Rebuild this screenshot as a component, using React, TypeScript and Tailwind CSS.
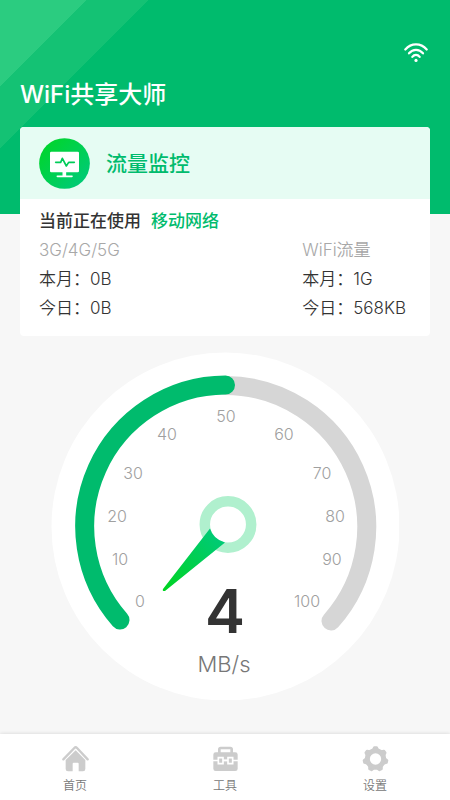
import React from 'react';

const TICKS = [
  { value: 0, x: 89, y: 255 },
  { value: 10, x: 69, y: 213 },
  { value: 20, x: 66, y: 170 },
  { value: 30, x: 82, y: 127 },
  { value: 40, x: 116, y: 88 },
  { value: 50, x: 175, y: 70 },
  { value: 60, x: 233, y: 88 },
  { value: 70, x: 271, y: 127 },
  { value: 80, x: 284, y: 170 },
  { value: 90, x: 281, y: 213 },
  { value: 100, x: 256, y: 255 },
];

const USAGE = [
  { title: '3G/4G/5G', month: '0B', today: '0B' },
  { title: 'WiFi流量', month: '1G', today: '568KB' },
];

function WifiIcon() {
  return (
    <svg className="w-6 h-5" viewBox="0 0 24 20" fill="none" stroke="#fff" strokeWidth="2.2" strokeLinecap="round">
      <path d="M1.3 6.5C4.2 3.2 8 1.4 12 1.4s7.800 1.800 10.700 5.100" />
      <path d="M5 10.300C7 8 9.400 6.900 12 6.900s5 1.100 7 3.400" />
      <path d="M8.300 13.800c1-1.300 2.300-2 3.700-2s2.700.7 3.700 2" />
      <circle cx="12" cy="17.400" r="1.600" fill="#fff" stroke="none" />
    </svg>
  );
}

function MonitorIcon() {
  return (
    <svg className="w-[51px] h-[51px]" viewBox="0 0 153 153">
      <defs>
        <linearGradient id="badge" x1="0" y1="0" x2="1" y2="1">
          <stop offset="0.1" stopColor="#00d52b" />
          <stop offset="1" stopColor="#00c982" />
        </linearGradient>
      </defs>
      <circle cx="76.500" cy="76.500" r="76" fill="url(#badge)" />
      <rect x="33" y="41" width="87" height="62" rx="4" fill="#fff" />
      <path d="M55 115h44" fill="none" stroke="#fff" strokeWidth="5" strokeLinecap="round" />
      <path d="M76 102v13" fill="none" stroke="#fff" strokeWidth="11" />
      <path d="M50 73h15l5-12 12 23 7-11h17" fill="none" stroke="#00cc58" strokeWidth="5" strokeLinecap="round" strokeLinejoin="round" />
    </svg>
  );
}

function HomeIcon() {
  return (
    <svg className="w-[27px] h-[27px]" viewBox="0 0 81 81" fill="#cccccc">
      <path d="M4 43 37 9q4-4 8 0l32 34" fill="none" stroke="#cccccc" strokeWidth="7" strokeLinecap="round" strokeLinejoin="round" />
      <path d="M11 45 41 16l29 29v27q0 7-7 7H50V56q0-3-3-3H35q-3 0-3 3v23H18q-7 0-7-7z" />
    </svg>
  );
}

function ToolboxIcon() {
  return (
    <svg className="w-[27px] h-[27px]" viewBox="0 0 81 81" fill="none">
      <path d="M22 24V13q0-4 4-4h29q4 0 4 4v11" stroke="#cccccc" strokeWidth="8" />
      <path d="M11 22h59q7 0 7 7v15H4V29q0-7 7-7z" fill="#cccccc" />
      <path d="M4 49h73v22q0 7-7 7H11q-7 0-7-7z" fill="#cccccc" />
      <path d="M19 38h14v18H19zM48 38h14v18H48z" fill="#cccccc" stroke="#fff" strokeWidth="5" />
      <path d="M35 46h11" stroke="#fff" strokeWidth="5" />
    </svg>
  );
}

const TEETH = [0, 1, 2, 3, 4, 5, 6];

function GearIcon() {
  return (
    <svg className="w-[27px] h-[27px]" viewBox="0 0 81 81" fill="none" stroke="#cccccc">
      <circle cx="40.500" cy="42" r="24.500" strokeWidth="15" />
      {TEETH.map((n) => (
        <path key={n} d="M37 7h7l5 10H32z" fill="#cccccc" strokeWidth="7" strokeLinejoin="round" transform={`rotate(${(n * 360) / TEETH.length} 40.500 42)`} />
      ))}
    </svg>
  );
}

const TABS = [
  { label: '首页', icon: HomeIcon },
  { label: '工具', icon: ToolboxIcon },
  { label: '设置', icon: GearIcon },
];

function Gauge() {
  return (
    <svg className="w-full" viewBox="0 0 348 348" textAnchor="middle">
      <defs>
        <linearGradient id="needle" x1="0" y1="1" x2="1" y2="0">
          <stop offset="0" stopColor="#00d420" />
          <stop offset="1" stopColor="#00c982" />
        </linearGradient>
      </defs>
      <circle cx="174.500" cy="174.500" r="174" fill="#fff" />
      {/* track and current level */}
      <g fill="none" strokeWidth="19" strokeLinecap="round">
        <path d="M174.500 33.500A141.500 141.500 0 0 1 280 269" stroke="#d6d6d6" />
        <path d="M69 268A141.500 141.500 0 0 1 174.500 33" stroke="#00bb6d" />
      </g>
      <g className="text-[16px] font-light" fill="#a0a0a0">
        {TICKS.map((t) => (
          <text key={t.value} x={t.x} y={t.y}>{t.value}</text>
        ))}
      </g>
      <circle cx="177" cy="172.500" r="23.200" fill="none" stroke="#b0f0ce" strokeWidth="10.500" />
      <path d="M159 176.500 112 237q-1 2.500 2 2L174 190.500Q162 187 159 176.500z" fill="url(#needle)" />
      <text x="174" y="281" className="text-[60px] font-semibold" fill="#333">4</text>
      <text x="173" y="320" className="text-[22px] font-light" fill="#777">MB/s</text>
    </svg>
  );
}

export default function App() {
  return (
    <div className="min-h-screen flex flex-col bg-[#f7f7f7] text-[#333] font-['Inter','Noto_Sans_CJK_SC',sans-serif]">
      <header className="flex flex-col px-5 pt-[43px] pb-[103px] bg-[linear-gradient(135deg,#2bcc80_61px,#14c274_61px,#14c274_105px,#00bb6d_105px)]">
        <div className="self-end pr-[2px]">
          <WifiIcon />
        </div>
        <h1 className="mt-4 text-2xl font-medium text-white">WiFi共享大师</h1>
      </header>

      <main className="flex-1 -mt-[87px] pb-8">
        <section className="mx-5 rounded bg-white overflow-hidden">
          <div className="flex items-center gap-4 h-[72px] px-[19px] bg-[#e6fcf3]">
            <MonitorIcon />
            <h2 className="pt-[2px] text-[21px] font-medium text-[#00bb6d]">流量监控</h2>
          </div>
          <div className="px-[19px] pt-2 pb-[13px] text-[17px] leading-[29px]">
            <p className="flex gap-[10px] font-medium">
              当前正在使用
              <span className="text-[#00bb6d]">移动网络</span>
            </p>
            <div className="flex justify-between pr-[5px] font-[350]">
              {USAGE.map((u) => (
                <div key={u.title}>
                  <h3 className="text-[#a8a8a8]">{u.title}</h3>
                  <p>本月：{u.month}</p>
                  <p>今日：{u.today}</p>
                </div>
              ))}
            </div>
          </div>
        </section>

        <section className="mt-4 px-[51px]">
          <Gauge />
        </section>
      </main>

      <nav className="grid grid-cols-3 h-[66px] bg-white shadow-[0_0_4px_rgba(0,0,0,0.15)]">
        {TABS.map(({ label, icon: Icon }) => (
          <button key={label} type="button" className="flex flex-col items-center gap-[6px] pt-[11px] text-xs font-[350] text-[#777]">
            <Icon />
            {label}
          </button>
        ))}
      </nav>
    </div>
  );
}
